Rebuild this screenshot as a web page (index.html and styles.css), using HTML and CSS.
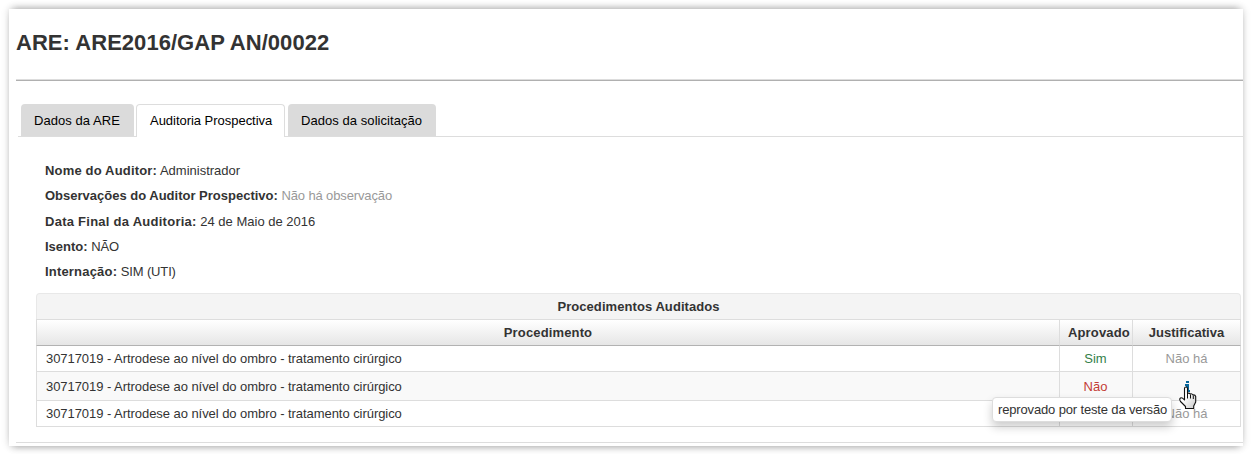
FILE: index.html
```html
<!DOCTYPE html>
<html lang="pt-BR">
<head>
<meta charset="utf-8">
<title>ARE2016/GAP AN/00022</title>
<link rel="stylesheet" href="styles.css">
</head>
<body>
<main class="panel">
  <h1 class="title"><span>ARE: ARE2016/GAP AN/00022</span></h1>
  <nav class="tabs">
    <a class="tab tab-are"><span>Dados da ARE</span></a>
    <a class="tab tab-active"><span>Auditoria Prospectiva</span></a>
    <a class="tab tab-request"><span>Dados da solicitação</span></a>
  </nav>
  <section class="details">
    <p class="detail"><b class="label-name">Nome do Auditor:</b> <span>Administrador</span></p>
    <p class="detail"><b>Observações do Auditor Prospectivo:</b> <span class="muted note">Não há observação</span></p>
    <p class="detail detail-date"><b class="label-date">Data Final da Auditoria:</b> <span>24 de Maio de 2016</span></p>
    <p class="detail"><b>Isento:</b> <span class="plain">NÃO</span></p>
    <p class="detail"><b class="label-stay">Internação:</b> <span class="plain">SIM (UTI)</span></p>
  </section>
  <section class="grid">
    <div class="caption"><b>Procedimentos Auditados</b></div>
    <div class="row head"><b class="cell">Procedimento</b><b class="cell approved">Aprovado</b><b class="cell">Justificativa</b></div>
    <div class="row"><span class="cell name">30717019 - Artrodese ao nível do ombro - tratamento cirúrgico</span><span class="cell yes">Sim</span><span class="cell muted">Não há</span></div>
    <div class="row odd"><span class="cell name">30717019 - Artrodese ao nível do ombro - tratamento cirúrgico</span><span class="cell no">Não</span><span class="cell">
      <svg class="info" width="6" height="11" viewBox="0 0 6 11"><path fill="#08679c" d="M2 0h3v2H2zM1 3h4v6h1v2H1V9h1V5H1z"/></svg></span></div>
    <div class="row"><span class="cell name">30717019 - Artrodese ao nível do ombro - tratamento cirúrgico</span><span class="cell"></span><span class="cell muted">Não há</span></div>
  </section>
  <div class="footer-line"></div>
</main>
<div class="tooltip">reprovado por teste da versão</div>
<svg class="cursor" width="18" height="24" viewBox="0 0 18 24"><defs><linearGradient id="hand" x1="0" y1="0" x2="1" y2="1"><stop offset=".4" stop-color="#fff"/><stop offset="1" stop-color="#c8c8c8"/></linearGradient></defs><path fill="url(#hand)" stroke="#111" stroke-width="1.1" stroke-linejoin="round" d="M5.500 14V2.500Q5.500 1 7 1T8.500 2.500V7.500Q10 6.500 11.200 8Q12.800 7.200 14 9Q16 8.500 16.700 10.500V16L14.700 20V22.500H6.500V20.500L1.500 15.500Q0 13 1.500 12Q3 11.200 5.500 14Z"/><path fill="none" stroke="#111" d="M8.500 7V12.500M11.500 8.500V12.500M14.300 9.500V13"/></svg>
</body>
</html>
```
FILE: styles.css
```css
* { box-sizing: border-box; }
body {
  margin: 0;
  width: 1251px;
  height: 454px;
  padding: 9px 8px 8px 9px;
  overflow: hidden;
  background: #fff;
  color: #333;
  font: 13px/20px "Liberation Sans", Arial, sans-serif;
}
.panel {
  width: 1234px;
  height: 437px;
  padding-left: 7px;
  background: #fff;
  box-shadow: 0 0 8px rgba(0, 0, 0, .16), 0 -5px 7px -4px rgba(0, 0, 0, .25), 0 5px 7px -4px rgba(0, 0, 0, .25);
}
.title {
  height: 72px;
  margin: 0;
  padding-top: 18px;
  border-bottom: 1px solid #b0b0b0;
  box-shadow: inset 0 -1px #ddd;
  font-size: 22px;
  line-height: 32px;
  letter-spacing: .04px;
}
.tabs {
  display: flex;
  height: 33px;
  margin: 23px 0 0 2px;
  padding-left: 3px;
  border-bottom: 1px solid #ddd;
  color: #000;
}
.tab {
  height: 32px;
  border-radius: 4px 4px 0 0;
  background: #dbdbdb;
  line-height: 33px;
  padding-left: 13px;
  white-space: nowrap;
}
.tab-are { width: 113px; letter-spacing: .06px; }
.tab-active {
  width: 149px;
  height: 33px;
  margin: 0 3px 0 2px;
  border: 1px solid #ddd;
  border-bottom: 0;
  background: #fff;
  line-height: 31px;
  letter-spacing: -.03px;
}
.tab-request { width: 148px; letter-spacing: .06px; }
.details {
  height: 156px;
  padding: 21px 0 0 29px;
}
.detail {
  height: 25px;
  margin: 0;
  line-height: 25px;
}
.detail-date { height: 26px; line-height: 27px; }
.label-name { letter-spacing: .17px; }
.label-date { letter-spacing: .26px; }
.label-stay { letter-spacing: .19px; }
.plain { letter-spacing: -.15px; }
.muted { color: #999; }
.note { letter-spacing: -.13px; }
.yes { color: #338048; }
.no { color: #c33c35; }
.grid {
  width: 1205px;
  margin-left: 20px;
}
.caption {
  height: 26px;
  border: 1px solid #e8e8e8;
  border-bottom: 0;
  border-radius: 4px 4px 0 0;
  background: #f4f4f4;
  text-align: center;
  line-height: 26px;
  letter-spacing: .07px;
}
.row {
  display: grid;
  grid-template-columns: 1023px 73px 109px;
  height: 26px;
  text-align: center;
  line-height: 26px;
}
.cell {
  border: 1px solid #ddd;
  border-width: 1px 0 0 1px;
  white-space: nowrap;
}
.cell:last-child { border-right-width: 1px; }
.head .cell { background: linear-gradient(#fff, #e5e5e5); letter-spacing: .14px; }
.head .cell:last-child { letter-spacing: .03px; }
.head .approved { padding-left: 8px; text-align: left; }
.head + .row .cell { border-top-color: #b2b2b2; }
.row .name { padding-left: 9px; text-align: left; letter-spacing: -.055px; }
.yes, .no { padding-right: 1px; }
.odd {
  height: 29px;
  background: #f9f9f9;
  line-height: 29px;
}
.row:last-child { height: 27px; border-bottom: 1px solid #ddd; }
.info { vertical-align: -1px; }
.footer-line {
  height: 1px;
  margin-top: 15px;
  background: #ddd;
}
.tooltip {
  position: absolute;
  left: 992px;
  top: 397px;
  width: 180px;
  height: 25px;
  padding-left: 5px;
  border: 1px solid #ddd;
  border-radius: 4px;
  background: #fff;
  box-shadow: 0 5px 10px rgba(0, 0, 0, .2);
  line-height: 23px;
  letter-spacing: -.15px;
  white-space: nowrap;
}
.cursor { position: absolute; left: 1179px; top: 386px; }
```
